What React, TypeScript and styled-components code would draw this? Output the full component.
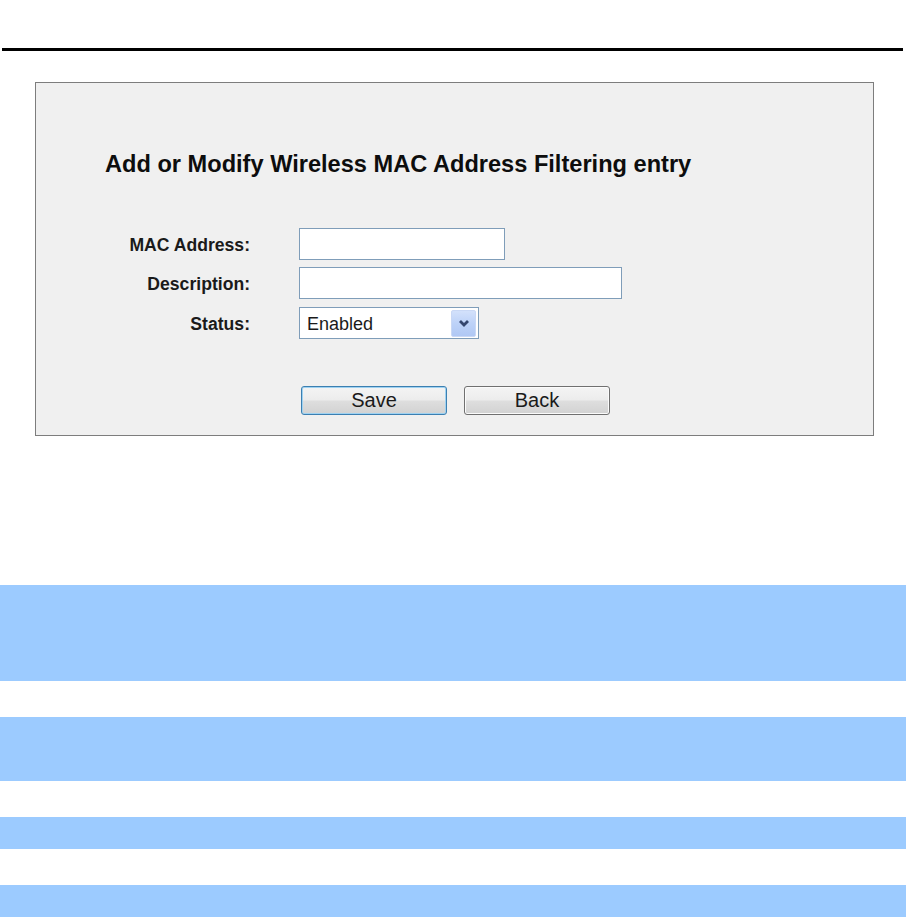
import React from "react";
import styled, { createGlobalStyle } from "styled-components";

const GlobalStyle = createGlobalStyle`
  html, body {
    margin: 0;
    padding: 0;
    background: #ffffff;
  }
  body {
    font-family: "Liberation Sans", Arial, sans-serif;
    overflow: hidden;
  }
`;

const Page = styled.div`
  display: flex;
  flex-direction: column;
  width: 906px;
  height: 917px;
  overflow: hidden;
`;

const HeaderRule = styled.div`
  flex-shrink: 0;
  margin: 48px 3px 0 2px;
  height: 3px;
  background: #000000;
`;

const Panel = styled.section`
  flex-shrink: 0;
  margin: 31px 0 0 35px;
  width: 839px;
  height: 354px;
  box-sizing: border-box;
  border: 1px solid #7d7d7d;
  background: #f0f0f0;
  padding: 67px 0 0 69px;
  display: flex;
  flex-direction: column;
`;

const Title = styled.h2`
  margin: 0;
  font-family: "Liberation Sans", Arial, sans-serif;
  font-size: 23.6px;
  line-height: 28px;
  font-weight: bold;
  color: #0d0d0d;
`;

const Form = styled.div`
  margin-top: 50px;
  display: grid;
  grid-template-columns: 145px auto;
  column-gap: 49px;
  row-gap: 7px;
  align-items: center;
`;

const Label = styled.label`
  justify-self: end;
  font-size: 17.6px;
  font-weight: bold;
  color: #1a1a1a;
  padding-top: 3px;
`;

const TextInput = styled.input<{ $width: number }>`
  box-sizing: border-box;
  width: ${(p) => p.$width}px;
  height: 32px;
  border: 1px solid #7f9db9;
  background: #ffffff;
  margin: 0;
  padding: 0 6px;
  font-family: "Liberation Sans", Arial, sans-serif;
  font-size: 17px;
  outline: none;
`;

const SelectBox = styled.div`
  box-sizing: border-box;
  width: 180px;
  height: 32px;
  margin-top: 1px;
  border: 1px solid #7f9db9;
  background: #ffffff;
  display: flex;
  align-items: center;
  justify-content: space-between;
  padding: 0 2px 0 7px;
`;

const SelectValue = styled.span`
  font-size: 18px;
  color: #1a1a1a;
  padding-top: 2px;
`;

const SelectArrow = styled.span`
  box-sizing: border-box;
  width: 25px;
  height: 27px;
  display: flex;
  align-items: center;
  justify-content: center;
  border: 1px solid #c9d8f5;
  border-radius: 2px;
  background: linear-gradient(#d3e1fb, #bdd2f8 50%, #b0c8f4);
`;

const ButtonRow = styled.div`
  margin: 47px 0 0 196px;
  display: flex;
  gap: 17px;
`;

const Button = styled.button<{ $focused?: boolean }>`
  box-sizing: border-box;
  width: 146px;
  height: 29px;
  border-radius: 3px;
  border: 1px solid ${(p) => (p.$focused ? "#3c7fb1" : "#707070")};
  box-shadow: ${(p) =>
    p.$focused ? "inset 0 0 0 1px #9fd2f1" : "inset 0 0 0 1px #fbfbfb"};
  background: linear-gradient(#f4f4f4, #ececec 48%, #dedede 52%, #d2d2d2);
  font-family: "Liberation Sans", Arial, sans-serif;
  font-size: 20px;
  color: #1a1a1a;
  padding: 0;
  cursor: pointer;
`;

const Band = styled.div<{ $height: number; $gap: number }>`
  flex-shrink: 0;
  height: ${(p) => p.$height}px;
  margin-top: ${(p) => p.$gap}px;
  background: #9ccbff;
`;

const Chevron = () => (
  <svg width="12" height="9" viewBox="0 0 12 9">
    <path
      d="M2 2 L6 6 L10 2"
      fill="none"
      stroke="#34466e"
      strokeWidth="2.8"
    />
  </svg>
);

export default function App() {
  return (
    <>
      <GlobalStyle />
      <Page>
        <HeaderRule />
        <Panel>
          <Title>Add or Modify Wireless MAC Address Filtering entry</Title>
          <Form>
            <Label htmlFor="mac">MAC Address:</Label>
            <TextInput id="mac" type="text" $width={206} />
            <Label htmlFor="desc">Description:</Label>
            <TextInput id="desc" type="text" $width={323} />
            <Label>Status:</Label>
            <SelectBox>
              <SelectValue>Enabled</SelectValue>
              <SelectArrow>
                <Chevron />
              </SelectArrow>
            </SelectBox>
          </Form>
          <ButtonRow>
            <Button $focused>Save</Button>
            <Button>Back</Button>
          </ButtonRow>
        </Panel>
        <Band $height={96} $gap={149} />
        <Band $height={64} $gap={36} />
        <Band $height={32} $gap={36} />
        <Band $height={40} $gap={36} />
      </Page>
    </>
  );
}
